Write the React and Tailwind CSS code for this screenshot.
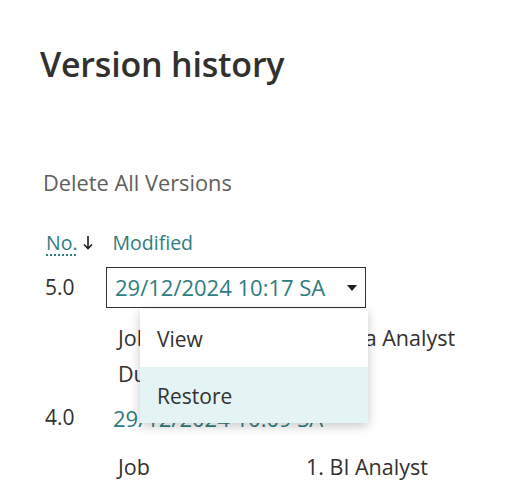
import React from "react";

const font = { fontFamily: '"Open Sans", "Noto Sans", sans-serif' };

function Caret() {
  return (
    <svg width="10" height="6" viewBox="0 0 10 6" className="block">
      <path d="M0 0 H10 L5 6 Z" fill="#201f1e" />
    </svg>
  );
}

function DownArrow() {
  return (
    <svg width="10" height="14" viewBox="0 0 10 14" className="block">
      <path d="M5 0 V12.5 M1 8.5 L5 12.5 L9 8.5" stroke="#201f1e" strokeWidth="1.6" fill="none" />
    </svg>
  );
}

export default function App() {
  return (
    <div className="relative w-[528px] h-[502px] bg-white overflow-hidden text-[#323130]" style={font}>
      <div className="pl-[40px] pt-[40px]">
        <h1 className="text-[34px] leading-[48px] font-semibold text-[#323130] tracking-[-0.2px]">Version history</h1>
        <div className="mt-[81px] pl-[3px] text-[21.8px] leading-[28px] text-[#605e5c]">Delete All Versions</div>
        <div className="mt-[32px] flex items-center h-[28px] text-[19.5px] text-[#2e7d80]">
          <span className="ml-[6px] underline decoration-dotted underline-offset-[4px] decoration-[#2e7d80]">No.</span>
          <span className="ml-[5px] -mt-[1px]"><DownArrow /></span>
          <span className="ml-[20px]">Modified</span>
        </div>
        <div className="mt-[10px] flex items-center h-[41px]">
          <span className="w-[66px] pl-[5px] text-[21px]">5.0</span>
          <div className="w-[260px] h-[41px] border border-[#323130] flex items-center pl-[8px] pr-[8px] text-[22px] text-[#2e7d80]">
            <span className="flex-1">29/12/2024 10:17 SA</span>
            <Caret />
          </div>
        </div>
        <div className="mt-[12px] flex h-[36px] items-center text-[21.5px]">
          <span className="ml-[78px] w-[188px]">Job</span>
          <span>2. Data Analyst</span>
        </div>
        <div className="flex h-[36px] items-center text-[21.5px]">
          <span className="ml-[78px] w-[188px]">Duration</span>
          <span></span>
        </div>
        <div className="mt-[8px] flex h-[36px] items-center text-[21px]">
          <span className="w-[73px] pl-[5px]">4.0</span>
          <span className="text-[#2e7d80] text-[22px]">29/12/2024 10:09 SA</span>
        </div>
        <div className="mt-[13px] flex h-[36px] items-center text-[21.5px]">
          <span className="ml-[78px] w-[188px]">Job</span>
          <span>1. BI Analyst</span>
        </div>
      </div>

      <div className="absolute left-[140px] top-[309px] w-[228px] bg-white shadow-[0_3px_10px_rgba(0,0,0,0.22)] text-[21px] text-[#323130]">
        <div className="h-[58px] flex items-center pl-[17px] pt-[3px]">View</div>
        <div className="h-[56px] flex items-center pl-[17px] pt-[3px] bg-[#e4f3f3]">Restore</div>
      </div>
    </div>
  );
}
